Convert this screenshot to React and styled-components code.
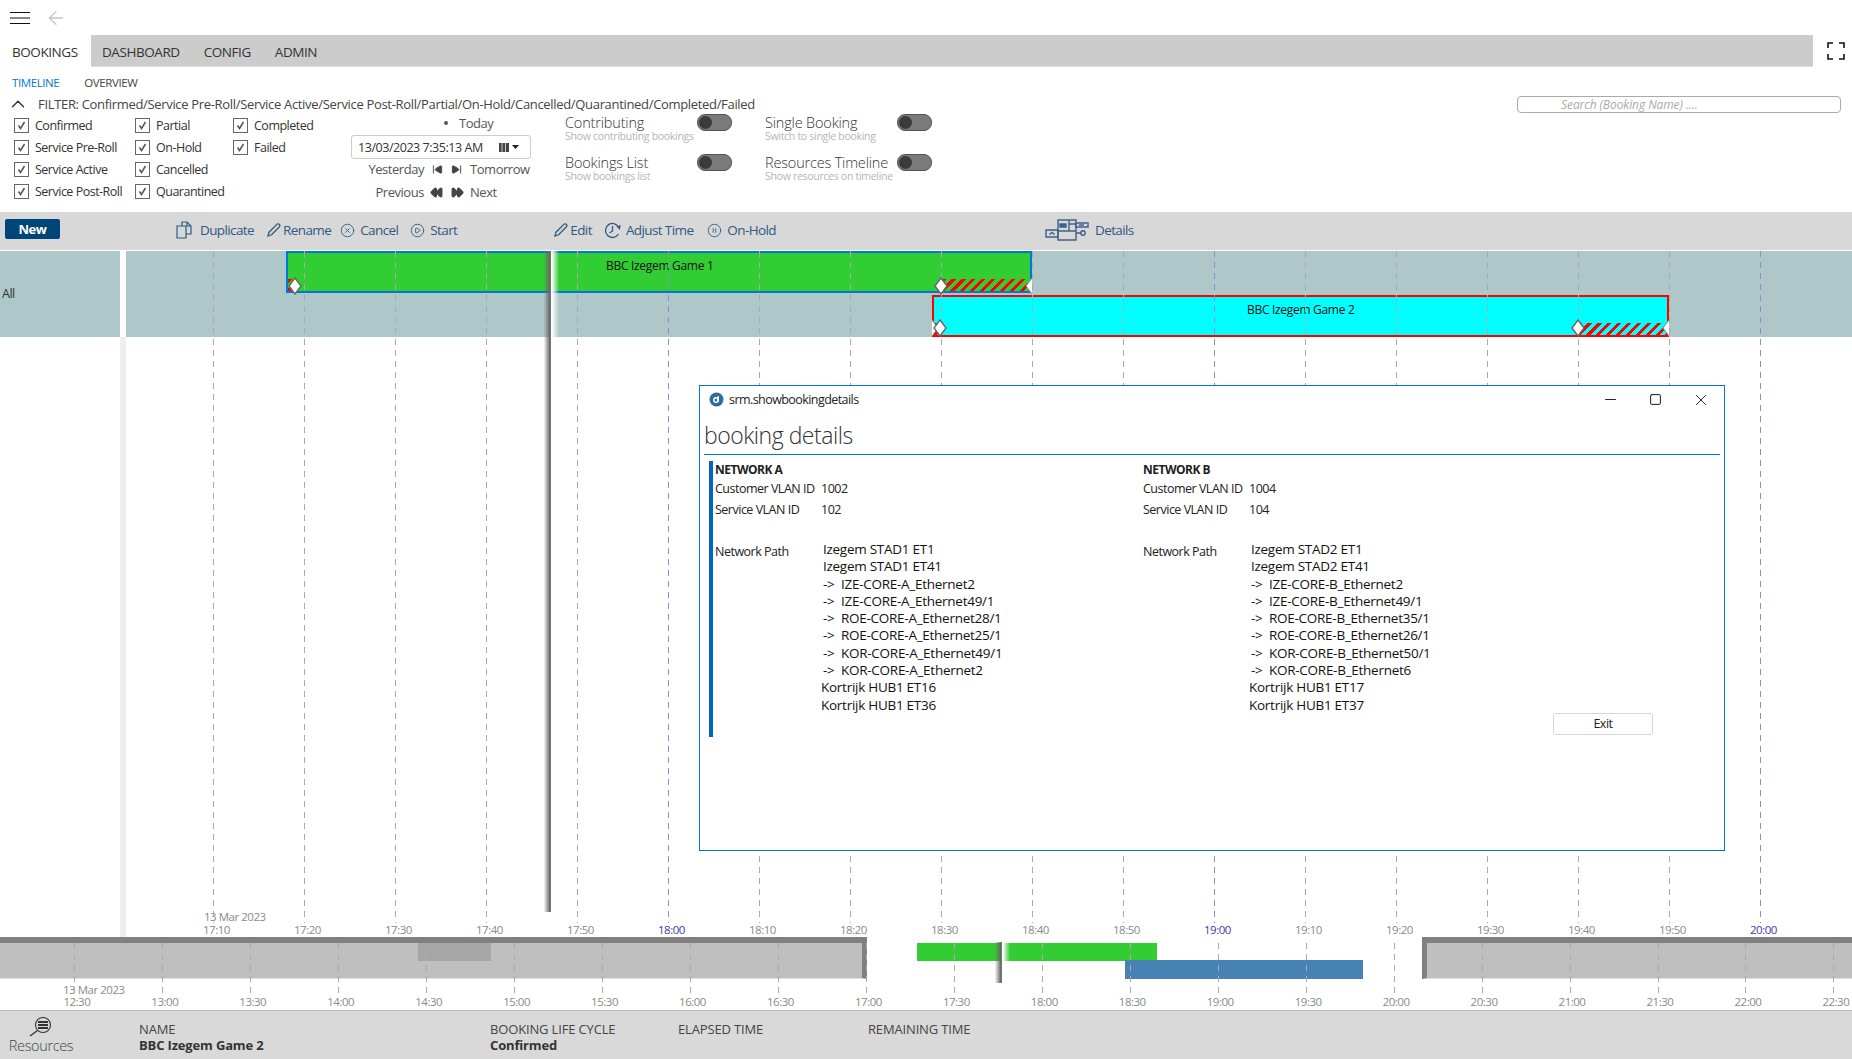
import React from "react";
import styled, { createGlobalStyle } from "styled-components";
import { ArrowLeft, ChevronUp, CircleX, CirclePlay, CirclePause, SkipBack, SkipForward, Rewind, FastForward, Minus, Square, X } from "lucide-react";

const GlobalStyle = createGlobalStyle`
  html, body {
    margin: 0;
    padding: 0;
    background: #ffffff;
  }
  body {
    font-family: "Open Sans", "Noto Sans", "Liberation Sans", sans-serif;
    letter-spacing: -0.03em;
  }
`;

const Page = styled.div`
  width: 1852px;
  height: 1059px;
  display: flex;
  flex-direction: column;
  overflow: hidden;
  color: #333;
`;

const TopBar = styled.div`
  height: 35px;
  display: flex;
  align-items: center;
  padding-left: 10px;
  gap: 15px;
  flex: none;
`;

const NavRow = styled.div`
  height: 32px;
  display: flex;
  flex: none;
`;

const NavStrip = styled.div`
  flex: 1;
  display: flex;
  align-items: center;
  gap: 24px;
  padding-left: 11px;
  background: #cccccc;
  border-bottom: 1px solid #e2e2e2;
`;

const NavTab = styled.div`
  font-size: 13.5px;
  letter-spacing: -0.032em;
  color: #333;
  height: 32px;
  line-height: 34px;
  width: ${(p) => (p.$active ? "79px" : "auto")};
  padding-left: ${(p) => (p.$active ? "12px" : "0")};
  background: ${(p) => (p.$active ? "#ffffff" : "transparent")};
`;

const FullscreenSlot = styled.div`
  width: 39px;
  box-sizing: border-box;
  padding-left: 6px;
  display: flex;
  align-items: center;
  justify-content: center;
`;

const SubTabs = styled.div`
  height: 27px;
  display: flex;
  align-items: center;
  padding: 4px 0 0 12px;
  box-sizing: border-box;
  gap: 25px;
  flex: none;
`;

const SubTab = styled.span`
  font-size: 11.5px;
  letter-spacing: -0.035em;
  color: ${(p) => (p.$active ? "#0078d7" : "#444")};
`;

const FilterHead = styled.div`
  height: 20px;
  display: flex;
  align-items: center;
  padding: 0 11px 0 7px;
  flex: none;
`;

const FilterText = styled.span`
  font-size: 13px;
  letter-spacing: -0.025em;
  color: #444;
  margin: -1px 0 0 9px;
`;

const SearchBox = styled.div`
  margin-left: auto;
  width: 324px;
  height: 17px;
  box-sizing: border-box;
  border: 1px solid #aaa;
  border-radius: 4px;
  font-size: 12px;
  font-style: italic;
  letter-spacing: -0.006em;
  line-height: 15px;
  color: #aaa;
  padding-left: 43px;
`;

const FilterPanel = styled.div`
  height: 98px;
  display: flex;
  padding-left: 14px;
  flex: none;
`;

const CheckGrid = styled.div`
  width: 337px;
  display: grid;
  grid-template-columns: 121px 98px 118px;
  grid-template-rows: repeat(4, 22px);
  grid-auto-flow: column;
`;

const CheckRow = styled.div`
  display: flex;
  align-items: center;
  gap: 6px;
  font-size: 12.5px;
  letter-spacing: -0.04em;
  color: #333;
`;

const CheckBox = styled.span`
  width: 13px;
  height: 13px;
  border: 1px solid #666;
  display: flex;
  align-items: center;
  justify-content: center;
  flex: none;
`;

const DateCol = styled.div`
  width: 180px;
  display: flex;
  flex-direction: column;
  font-size: 13px;
  letter-spacing: -0.035em;
  color: #555;
`;

const TodayRow = styled.div`
  height: 21px;
  margin: -2px 0 2px;
  display: flex;
  align-items: center;
  padding-left: 93px;
  gap: 11px;
`;

const Bullet = styled.span`
  width: 4px;
  height: 4px;
  border-radius: 50%;
  background: #555;
`;

const DateInput = styled.div`
  height: 24px;
  box-sizing: border-box;
  border: 1px solid #ccc;
  border-radius: 3px;
  display: flex;
  align-items: center;
  padding: 0 10px 0 6px;
  font-size: 12.5px;
  color: #333;
  justify-content: space-between;
`;

const StepRow = styled.div`
  height: 22px;
  margin-top: ${(p) => p.$mt || 0}px;
  display: grid;
  grid-template-columns: 73px 46px auto;
  align-items: center;
`;

const StepLabel = styled.span`
  text-align: ${(p) => (p.$right ? "right" : "left")};
`;

const StepIcons = styled.span`
  display: flex;
  justify-content: center;
  gap: ${(p) => p.$gap}px;
  color: #444;
`;

const ToggleGrid = styled.div`
  margin-left: 34px;
  display: grid;
  grid-template-columns: 200px 200px;
  grid-auto-rows: 40px;
`;

const ToggleCell = styled.div`
  display: flex;
  padding-top: 1px;
`;

const ToggleText = styled.div`
  width: 132px;
  flex: none;
`;

const ToggleTitle = styled.div`
  font-size: 14.5px;
  font-weight: 300;
  letter-spacing: -0.012em;
  line-height: 16px;
  color: #333;
  white-space: nowrap;
`;

const ToggleSub = styled.div`
  font-size: 10.5px;
  letter-spacing: -0.028em;
  line-height: 10px;
  color: #b5b5b5;
  white-space: nowrap;
`;

const Toggle = styled.span`
  width: 32px;
  height: 15px;
  margin-top: -1px;
  border-radius: 8px;
  background: #7a7a7a;
  border: 1px solid #555;
  display: flex;
  align-items: center;
  padding-left: 1px;
  flex: none;
  &::before {
    content: "";
    width: 13px;
    height: 13px;
    border-radius: 50%;
    background: #3a3a3a;
  }
`;

const Toolbar = styled.div`
  height: 38px;
  box-sizing: border-box;
  background: #d8d8d8;
  display: flex;
  align-items: center;
  padding: 0 0 2px 5px;
  flex: none;
`;

const NewButton = styled.div`
  width: 55px;
  height: 20px;
  margin-top: -2px;
  border-radius: 2px;
  background: #004578;
  color: #ffffff;
  font-size: 13px;
  font-weight: 700;
  line-height: 20px;
  text-align: center;
`;

const ToolButton = styled.div`
  display: flex;
  align-items: center;
  gap: ${(p) => p.$gap || 5}px;
  margin-left: ${(p) => p.$ml}px;
  font-size: 13.5px;
  letter-spacing: -0.045em;
  color: #2d5a84;
`;

const Timeline = styled.div`
  flex: 1;
  position: relative;
  overflow: hidden;
`;

const Lane = styled.div`
  height: 86px;
  margin-top: 1px;
  display: flex;
`;

const LaneLabel = styled.div`
  width: 120px;
  background: #aec8ca;
  font-size: 12.5px;
  color: #333;
  line-height: 86px;
  padding-left: 2px;
  box-sizing: border-box;
`;

const LaneTrack = styled.div`
  flex: 1;
  margin-left: 6px;
  background: #aec8ca;
`;

const Gutter = styled.div`
  position: absolute;
  left: 120px;
  top: 87px;
  bottom: 0;
  width: 6px;
  background: #eeeeee;
`;

const GridLine = styled.div`
  position: absolute;
  top: 1px;
  width: 1px;
  height: ${(p) => p.$h}px;
  background: repeating-linear-gradient(
    180deg,
    ${(p) => (p.$hour ? "#8c8cd0" : "#aaaaaa")} 0 6px,
    transparent 6px 11px
  );
  z-index: 2;
`;

const AxisLabel = styled.span`
  position: absolute;
  top: ${(p) => p.$top}px;
  font-size: 11.5px;
  line-height: 14px;
  color: ${(p) => (p.$hour ? "#3a3aa8" : "#8a8a8a")};
  white-space: nowrap;
`;

const Booking = styled.div`
  position: absolute;
  left: ${(p) => p.$left}px;
  top: ${(p) => p.$top}px;
  width: ${(p) => p.$width}px;
  height: 42px;
  box-sizing: border-box;
  border: 2px solid ${(p) => p.$line};
  background: ${(p) => p.$fill};
  z-index: 1;
  font-size: 12px;
  letter-spacing: -0.025em;
  color: #111;
  padding-top: 4px;
  padding-left: ${(p) => p.$pad}px;
`;

const Hatch = styled.div`
  position: absolute;
  left: ${(p) => p.$left}px;
  bottom: 0;
  width: ${(p) => p.$width}px;
  height: 12px;
  background: repeating-linear-gradient(135deg, #ff0000 0 3px, transparent 3px 7px);
`;

const DiamondMark = styled.svg`
  position: absolute;
  left: ${(p) => p.$left}px;
  top: ${(p) => p.$top}px;
  z-index: 3;
`;

const NowLine = styled.div`
  position: absolute;
  left: ${(p) => p.$left}px;
  top: ${(p) => p.$top}px;
  height: ${(p) => p.$h}px;
  width: 7px;
  background: linear-gradient(90deg, rgba(120, 120, 120, 0.05), #666666 85%, #808080);
  z-index: 3;
  &::after {
    content: "";
    position: absolute;
    left: 7px;
    top: 0;
    width: 8px;
    height: ${(p) => p.$glow}px;
    background: linear-gradient(90deg, #ffffff 10%, rgba(255, 255, 255, 0));
  }
`;

const Dialog = styled.div`
  position: absolute;
  left: 699px;
  top: 135px;
  width: 1026px;
  height: 466px;
  box-sizing: border-box;
  border: 1px solid #0078d7;
  background: #ffffff;
  z-index: 4;
  display: flex;
  flex-direction: column;
`;

const DialogTitleBar = styled.div`
  height: 27px;
  display: flex;
  align-items: center;
  padding: 0 14px 0 9px;
  gap: 5px;
  font-size: 12.5px;
  letter-spacing: -0.045em;
  color: #222;
  flex: none;
`;

const WindowButtons = styled.div`
  margin-left: auto;
  display: flex;
  align-items: center;
  gap: 30px;
  color: #111;
`;

const DialogHeading = styled.div`
  margin: 5px 4px 0 4px;
  height: 37px;
  box-sizing: border-box;
  border-bottom: 1px solid #0078d7;
  font-size: 23px;
  font-weight: 300;
  line-height: 34px;
  color: #333;
`;

const DialogBody = styled.div`
  display: flex;
  margin: 6px 0 0 9px;
  flex: 1;
`;

const BlueBar = styled.div`
  width: 4px;
  height: 276px;
  background: #0067c0;
  flex: none;
`;

const NetworkCol = styled.div`
  width: ${(p) => p.$width}px;
  margin-left: ${(p) => p.$ml || 0}px;
  flex: none;
  font-size: 12.5px;
  letter-spacing: -0.04em;
  color: #222;
`;

const NetworkTitle = styled.div`
  font-weight: 700;
  font-size: 12px;
  line-height: 16px;
  margin-top: 1px;
  margin-bottom: 2px;
`;

const InfoRow = styled.div`
  display: grid;
  grid-template-columns: 106px auto;
  height: 21px;
  line-height: 18px;
`;

const PathRow = styled.div`
  display: grid;
  grid-template-columns: 106px auto;
  margin-top: 19px;
`;

const PathLabel = styled.div`
  padding-top: 2px;
  line-height: 18px;
`;

const PathItem = styled.div`
  font-size: 13.5px;
  letter-spacing: -0.02em;
  line-height: 17.3px;
  color: #111;
  white-space: nowrap;
  padding-left: ${(p) => (p.$hub ? 0 : 2)}px;
`;

const Arrow = styled.span`
  display: inline-block;
  width: 18px;
`;

const ExitButton = styled.div`
  width: 100px;
  height: 22px;
  margin-top: 252px;
  box-sizing: border-box;
  border: 1px solid #d6d6d6;
  border-radius: 3px;
  font-size: 12.5px;
  line-height: 20px;
  text-align: center;
  color: #222;
  flex: none;
`;

const Overview = styled.div`
  height: 73px;
  position: relative;
  overflow: hidden;
  flex: none;
`;

const Shade = styled.div`
  position: absolute;
  left: ${(p) => p.$left}px;
  width: ${(p) => p.$width}px;
  top: 0;
  height: 42px;
  box-sizing: border-box;
  background: #bfbfbf;
  border-top: 6px solid #808080;
  border-bottom: 1px solid #dddddd;
  border-left: ${(p) => (p.$edge === "left" ? "5px solid #808080" : "0")};
  border-right: ${(p) => (p.$edge === "right" ? "5px solid #808080" : "0")};
`;

const Block = styled.div`
  position: absolute;
  left: ${(p) => p.$left}px;
  width: ${(p) => p.$width}px;
  top: ${(p) => p.$top}px;
  height: ${(p) => p.$h}px;
  background: ${(p) => p.$fill};
`;

const Footer = styled.div`
  height: 49px;
  box-sizing: border-box;
  background: #d9d9d9;
  border-top: 1px solid #bdbdbd;
  display: grid;
  grid-template-columns: 139px 351px 188px 190px 1fr;
  flex: none;
`;

const ResourcesCell = styled.div`
  display: flex;
  flex-direction: column;
  align-items: center;
  width: 82px;
  padding-top: 6px;
  font-size: 14.5px;
  font-weight: 300;
  letter-spacing: -0.025em;
  line-height: 17px;
  color: #444;
`;

const FooterCell = styled.div`
  padding-top: 10px;
  font-size: 13px;
  letter-spacing: -0.012em;
  line-height: 16px;
  color: #444;
`;

const FooterValue = styled.div`
  font-weight: 700;
  color: #333;
`;

const HamburgerIcon = () => (
  <svg width="20" height="14" viewBox="0 0 20 14">
    <path d="M0 1.5h20M0 7h20M0 12.5h20" stroke="#111" strokeWidth="1.2" fill="none" />
  </svg>
);

const FullscreenIcon = () => (
  <svg width="18" height="18" viewBox="0 0 18 18">
    <path d="M1 6V1h5M12 1h5v5M17 12v5h-5M6 17H1v-5" stroke="#111" strokeWidth="1.6" fill="none" />
  </svg>
);

const TickIcon = () => (
  <svg width="11" height="11" viewBox="0 0 11 11">
    <path d="M2.5 5.5l2 3 4-6.5" stroke="#555" strokeWidth="1.5" fill="none" />
  </svg>
);

const CalendarIcon = () => (
  <svg width="22" height="11" viewBox="0 0 22 11">
    <path d="M1 1h10v9H1z" fill="#444" />
    <path d="M4 1v9M7.5 1v9" stroke="#ccc" strokeWidth="1" />
    <path d="M14 3h7l-3.5 4z" fill="#222" />
  </svg>
);

const DuplicateIcon = () => (
  <svg width="17" height="18" viewBox="0 0 17 18" fill="none" stroke="#2d5a84" strokeWidth="1.2">
    <path d="M1 5h9v12H1zM6 5V1h5l4 4v8h-5" />
    <path d="M11 1v4h4" />
  </svg>
);

const PencilIcon = () => (
  <svg width="14" height="14" viewBox="0 0 14 14" fill="none" stroke="#2d5a84" strokeWidth="1.3">
    <path d="M1 13l1-3.8L9.8 1.4a1.5 1.5 0 0 1 2.6 2.4L4.6 11.8z" />
  </svg>
);

const ClockTurnIcon = () => (
  <svg width="17" height="17" viewBox="0 0 17 17" fill="none" stroke="#2d5a84" strokeWidth="1.3">
    <path d="M14.5 12A7 7 0 1 1 15 6" />
    <path d="M8.5 4v5l-3 2M13 4l2.5 2.5L16 3" />
  </svg>
);

const DetailsIcon = () => (
  <svg width="44" height="24" viewBox="0 0 44 24" fill="none" stroke="#3f6088" strokeWidth="1.4">
    <path d="M1 12h12v7H1zM4.5 16.5l2.5-2 2.5 2" />
    <path d="M13 2h18v20H13z" />
    <path d="M15 6h6v3h-6z" fill="#3f6088" />
    <path d="M24 2v11M13 13h18M24 6h7" />
    <path d="M31 5h12v4H31zM34 7h5M31 15h5" />
    <circle cx="38" cy="15" r="2.2" />
  </svg>
);

const ResourcesIcon = () => (
  <svg width="24" height="20" viewBox="0 0 24 20" fill="none" stroke="#333" strokeWidth="1.1">
    <circle cx="14" cy="8" r="7.5" />
    <path d="M9 5h10M9 8h10M9 11h10" strokeWidth="2" />
    <path d="M8.5 13.5L1 19" strokeWidth="1.4" />
  </svg>
);

const Diamond = ({ left, top }) => (
  <DiamondMark $left={left} $top={top} width="14" height="18" viewBox="0 0 14 18">
    <path d="M7 1l6 8-6 8-6-8z" fill="#fff" stroke="#666" strokeWidth="1.4" />
  </DiamondMark>
);

// end markers are cut in half by the edge of the booking
const HalfDiamond = ({ left, top, side }) => (
  <DiamondMark $left={left} $top={top} width="7" height="18" viewBox={side === "left" ? "0 0 7 18" : "7 0 7 18"}>
    <path d="M7 1l6 8-6 8-6-8z" fill="#fff" stroke="#888" strokeWidth="1" />
  </DiamondMark>
);

const AppLogo = () => (
  <svg width="15" height="15" viewBox="0 0 15 15">
    <circle cx="7.5" cy="7.5" r="7" fill="#2f6d9e" />
    <circle cx="7" cy="8" r="2.2" fill="none" stroke="#fff" strokeWidth="1.4" />
    <path d="M9.2 4v6" stroke="#fff" strokeWidth="1.4" />
  </svg>
);

const checks = [
  "Confirmed",
  "Service Pre-Roll",
  "Service Active",
  "Service Post-Roll",
  "Partial",
  "On-Hold",
  "Cancelled",
  "Quarantined",
  "Completed",
  "Failed",
];

const toggles = [
  ["Contributing", "Show contributing bookings"],
  ["Single Booking", "Switch to single booking"],
  ["Bookings List", "Show bookings list"],
  ["Resources Timeline", "Show resources on timeline"],
];

const networks = [
  {
    title: "NETWORK A",
    customer: "1002",
    service: "102",
    start: ["Izegem STAD1 ET1", "Izegem STAD1 ET41"],
    hops: [
      "IZE-CORE-A_Ethernet2",
      "IZE-CORE-A_Ethernet49/1",
      "ROE-CORE-A_Ethernet28/1",
      "ROE-CORE-A_Ethernet25/1",
      "KOR-CORE-A_Ethernet49/1",
      "KOR-CORE-A_Ethernet2",
    ],
    end: ["Kortrijk HUB1 ET16", "Kortrijk HUB1 ET36"],
  },
  {
    title: "NETWORK B",
    customer: "1004",
    service: "104",
    start: ["Izegem STAD2 ET1", "Izegem STAD2 ET41"],
    hops: [
      "IZE-CORE-B_Ethernet2",
      "IZE-CORE-B_Ethernet49/1",
      "ROE-CORE-B_Ethernet35/1",
      "ROE-CORE-B_Ethernet26/1",
      "KOR-CORE-B_Ethernet50/1",
      "KOR-CORE-B_Ethernet6",
    ],
    end: ["Kortrijk HUB1 ET17", "Kortrijk HUB1 ET37"],
  },
];

const pad = (n) => String(n).padStart(2, "0");
const clock = (mins) => `${pad(Math.floor(mins / 60))}:${pad(mins % 60)}`;

// main axis: one tick every 10 minutes, overview axis: every 30
const mainTicks = Array.from({ length: 18 }, (_, i) => ({ x: 213 + i * 91, mins: 17 * 60 + 10 + i * 10 }));
const overviewTicks = Array.from({ length: 21 }, (_, i) => ({ x: 74.4 + i * 87.95, mins: 12 * 60 + 30 + i * 30 }));

const NetworkColumn = ({ net, width, ml }) => (
  <NetworkCol $width={width} $ml={ml}>
    <NetworkTitle>{net.title}</NetworkTitle>
    <InfoRow>
      <span>Customer VLAN ID</span>
      <span>{net.customer}</span>
    </InfoRow>
    <InfoRow>
      <span>Service VLAN ID</span>
      <span>{net.service}</span>
    </InfoRow>
    <PathRow>
      <PathLabel>Network Path</PathLabel>
      <div>
        {net.start.map((t) => (
          <PathItem key={t}>{t}</PathItem>
        ))}
        {net.hops.map((t) => (
          <PathItem key={t}>
            <Arrow>-&gt;</Arrow>
            {t}
          </PathItem>
        ))}
        {net.end.map((t) => (
          <PathItem key={t} $hub>
            {t}
          </PathItem>
        ))}
      </div>
    </PathRow>
  </NetworkCol>
);

const App = () => {
  return (
    <Page>
      <GlobalStyle />
      <TopBar>
        <HamburgerIcon />
        <ArrowLeft size={22} color="#c4c4c4" strokeWidth={1.4} />
      </TopBar>
      <NavRow>
        <NavTab $active>BOOKINGS</NavTab>
        <NavStrip>
          <NavTab>DASHBOARD</NavTab>
          <NavTab>CONFIG</NavTab>
          <NavTab>ADMIN</NavTab>
        </NavStrip>
        <FullscreenSlot>
          <FullscreenIcon />
        </FullscreenSlot>
      </NavRow>
      <SubTabs>
        <SubTab $active>TIMELINE</SubTab>
        <SubTab>OVERVIEW</SubTab>
      </SubTabs>
      <FilterHead>
        <ChevronUp size={22} color="#333" strokeWidth={1.6} />
        <FilterText>
          FILTER: Confirmed/Service Pre-Roll/Service Active/Service Post-Roll/Partial/On-Hold/Cancelled/Quarantined/Completed/Failed
        </FilterText>
        <SearchBox>Search (Booking Name) ....</SearchBox>
      </FilterHead>
      <FilterPanel>
        <CheckGrid>
          {checks.map((c) => (
            <CheckRow key={c}>
              <CheckBox>
                <TickIcon />
              </CheckBox>
              {c}
            </CheckRow>
          ))}
        </CheckGrid>
        <DateCol>
          <TodayRow>
            <Bullet />
            Today
          </TodayRow>
          <DateInput>
            13/03/2023 7:35:13 AM
            <CalendarIcon />
          </DateInput>
          <StepRow $mt={-1}>
            <StepLabel $right>Yesterday</StepLabel>
            <StepIcons $gap={8}>
              <SkipBack size={11} fill="#444" />
              <SkipForward size={11} fill="#444" />
            </StepIcons>
            <StepLabel>Tomorrow</StepLabel>
          </StepRow>
          <StepRow $mt={1}>
            <StepLabel $right>Previous</StepLabel>
            <StepIcons $gap={8}>
              <Rewind size={13} fill="#444" />
              <FastForward size={13} fill="#444" />
            </StepIcons>
            <StepLabel>Next</StepLabel>
          </StepRow>
        </DateCol>
        <ToggleGrid>
          {toggles.map(([title, sub]) => (
            <ToggleCell key={title}>
              <ToggleText>
                <ToggleTitle>{title}</ToggleTitle>
                <ToggleSub>{sub}</ToggleSub>
              </ToggleText>
              <Toggle />
            </ToggleCell>
          ))}
        </ToggleGrid>
      </FilterPanel>
      <Toolbar>
        <NewButton>New</NewButton>
        <ToolButton $ml={116} $gap={7}>
          <DuplicateIcon />
          Duplicate
        </ToolButton>
        <ToolButton $ml={13} $gap={2}>
          <PencilIcon />
          Rename
        </ToolButton>
        <ToolButton $ml={9}>
          <CircleX size={15} strokeWidth={1.4} />
          Cancel
        </ToolButton>
        <ToolButton $ml={12}>
          <CirclePlay size={15} strokeWidth={1.4} />
          Start
        </ToolButton>
        <ToolButton $ml={97} $gap={2}>
          <PencilIcon />
          Edit
        </ToolButton>
        <ToolButton $ml={12} $gap={5}>
          <ClockTurnIcon />
          Adjust Time
        </ToolButton>
        <ToolButton $ml={14}>
          <CirclePause size={15} strokeWidth={1.4} />
          On-Hold
        </ToolButton>
        <ToolButton $ml={269} $gap={6}>
          <DetailsIcon />
          Details
        </ToolButton>
      </Toolbar>
      <Timeline>
        <Lane>
          <LaneLabel>All</LaneLabel>
          <LaneTrack />
        </Lane>
        <Gutter />
        {mainTicks.map((t) => (
          <React.Fragment key={t.mins}>
            <GridLine $h={672} $hour={t.mins % 60 === 0} style={{ left: t.x }} />
            <AxisLabel $top={673} $hour={t.mins % 60 === 0} style={{ left: t.x - 10 }}>
              {clock(t.mins)}
            </AxisLabel>
          </React.Fragment>
        ))}
        <AxisLabel $top={660} style={{ left: 204 }}>
          13 Mar 2023
        </AxisLabel>
        <Booking $left={286} $top={1} $width={746} $line="#0078d7" $fill="#32cd32" $pad={318}>
          BBC Izegem Game 1
          <Hatch $left={0} $width={8} />
          <Hatch $left={654} $width={88} />
        </Booking>
        <Booking $left={932} $top={45} $width={737} $line="#ff0000" $fill="#00ffff" $pad={313}>
          BBC Izegem Game 2
          <Hatch $left={0} $width={8} />
          <Hatch $left={644} $width={89} />
        </Booking>
        <Diamond left={288} top={27} />
        <Diamond left={934} top={27} />
        <HalfDiamond left={1025} top={27} side="left" />
        <HalfDiamond left={932} top={69} side="right" />
        <Diamond left={933} top={69} />
        <Diamond left={1571} top={69} />
        <HalfDiamond left={1662} top={69} side="left" />
        <NowLine $left={544} $top={1} $h={661} $glow={86} />
        <Dialog>
          <DialogTitleBar>
            <AppLogo />
            srm.showbookingdetails
            <WindowButtons>
              <Minus size={17} strokeWidth={1.3} />
              <Square size={13} strokeWidth={1.8} />
              <X size={18} strokeWidth={1.2} />
            </WindowButtons>
          </DialogTitleBar>
          <DialogHeading>booking details</DialogHeading>
          <DialogBody>
            <BlueBar />
            <NetworkColumn net={networks[0]} width={428} ml={2} />
            <NetworkColumn net={networks[1]} width={410} />
            <ExitButton>Exit</ExitButton>
          </DialogBody>
        </Dialog>
      </Timeline>
      <Overview>
        <Shade $left={0} $width={867} $edge="right" />
        <Shade $left={1422} $width={430} $edge="left" />
        <Block $left={418} $width={73} $top={6} $h={18} $fill="#a6a6a6" />
        <Block $left={917} $width={240} $top={6} $h={18} $fill="#32cd32" />
        <Block $left={1125} $width={238} $top={23} $h={19} $fill="#4682b4" />
        {overviewTicks.map((t) => (
          <React.Fragment key={t.mins}>
            <GridLine $h={51} style={{ left: t.x, top: 6 }} />
            <AxisLabel $top={58} style={{ left: t.x - 11 }}>
              {clock(t.mins)}
            </AxisLabel>
          </React.Fragment>
        ))}
        <AxisLabel $top={46} style={{ left: 63 }}>
          13 Mar 2023
        </AxisLabel>
        <NowLine $left={995} $top={5} $h={41} $glow={19} />
      </Overview>
      <Footer>
        <ResourcesCell>
          <ResourcesIcon />
          Resources
        </ResourcesCell>
        <FooterCell>
          NAME
          <FooterValue>BBC Izegem Game 2</FooterValue>
        </FooterCell>
        <FooterCell>
          BOOKING LIFE CYCLE
          <FooterValue>Confirmed</FooterValue>
        </FooterCell>
        <FooterCell>ELAPSED TIME</FooterCell>
        <FooterCell>REMAINING TIME</FooterCell>
      </Footer>
    </Page>
  );
};

export default App;
